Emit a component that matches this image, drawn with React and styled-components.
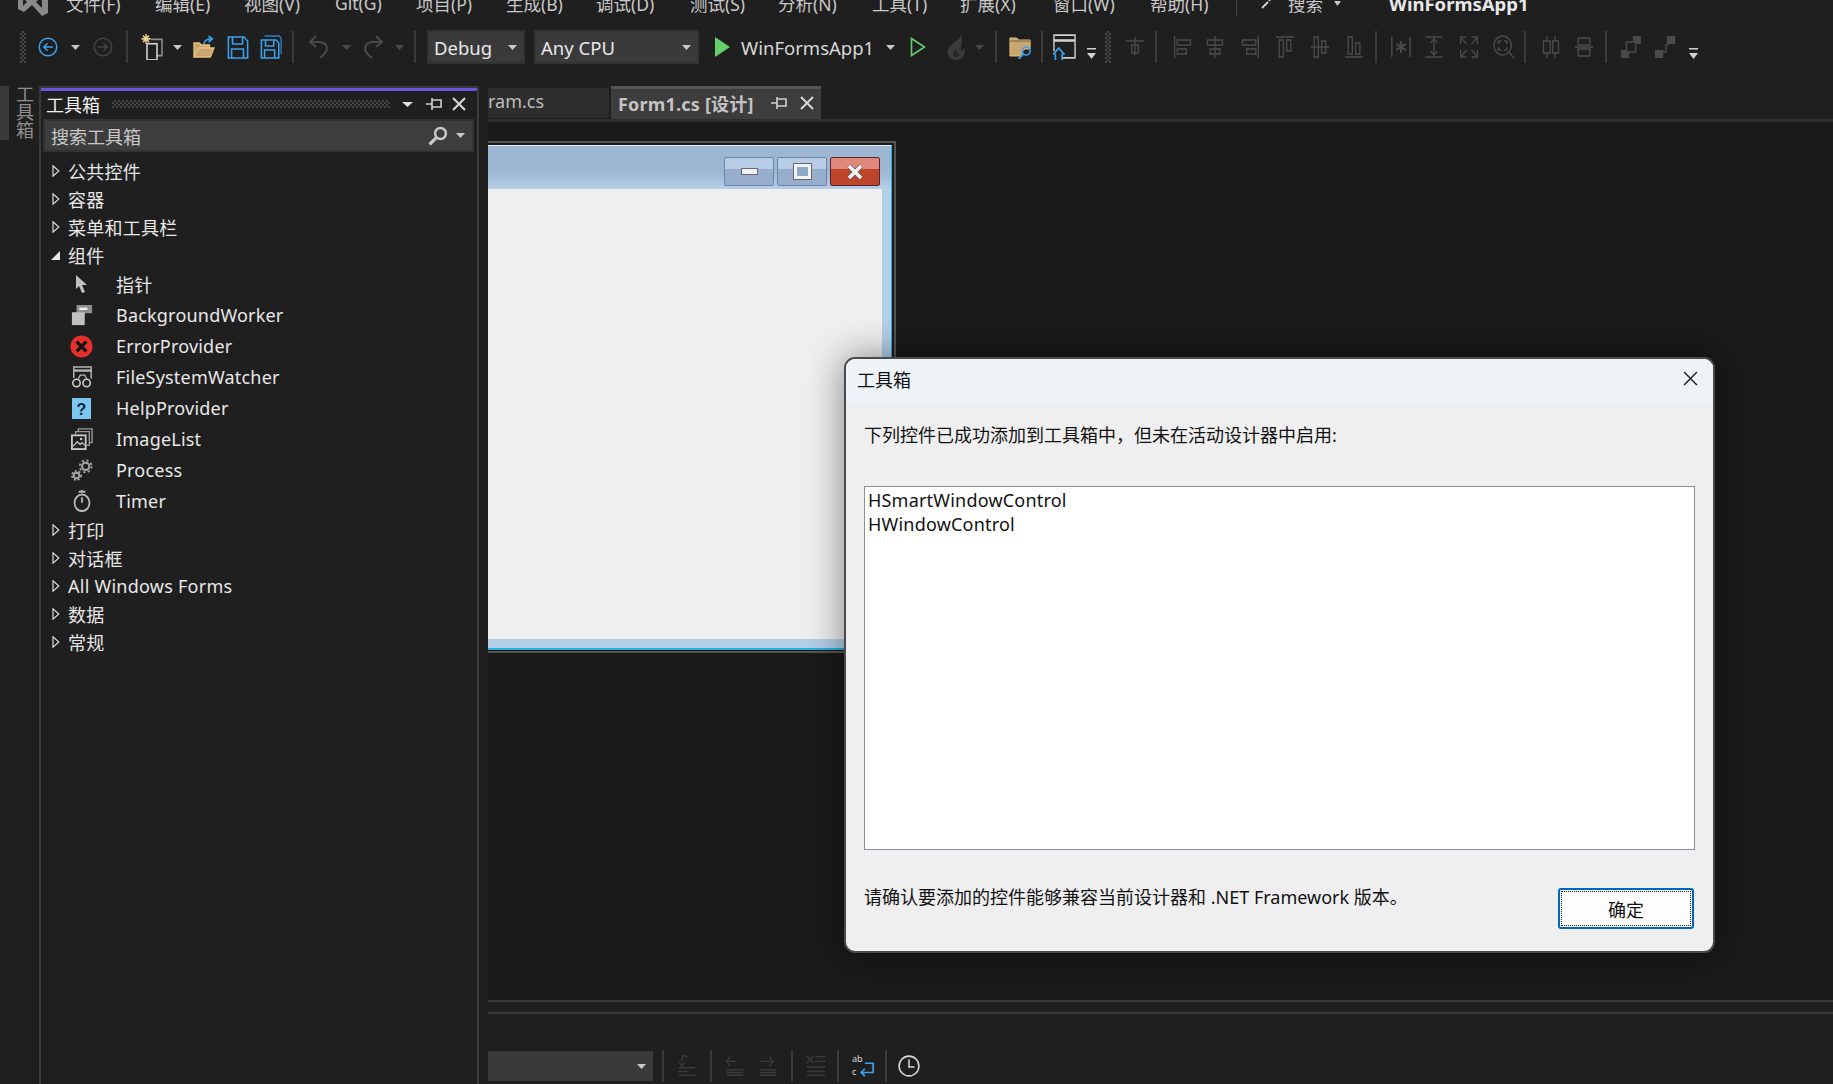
import React from "react";
import styled, { createGlobalStyle } from "styled-components";

const FONT = `"Noto Sans", "Noto Sans CJK SC", sans-serif`;

const GlobalStyle = createGlobalStyle`
  html, body {
    margin: 0;
    padding: 0;
    background: #1f1f1f;
    overflow: hidden;
  }
  * { box-sizing: border-box; }
`;

const Svg = ({ w = 22, h = 22, vb = "0 0 24 24", children }) => (
  <svg width={w} height={h} viewBox={vb} fill="none" preserveAspectRatio="none" style={{ display: "block" }}>
    {children}
  </svg>
);

const Caret = ({ color = "#c8c8c8", w = 9 }) => (
  <svg width={w} height={5} viewBox="0 0 9 5" preserveAspectRatio="none" style={{ display: "block" }}>
    <path d="M0 0h9L4.5 5z" fill={color} />
  </svg>
);

const BLUE = "#3aa0ef";
const DIM = "#4a4a4a";

const CircleArrow = ({ color, dir }) => (
  <Svg w={20} h={20}>
    <circle cx="12" cy="12" r="10.5" stroke={color} strokeWidth="1.8" />
    <path d={dir === "left" ? "M18 12H7M11.5 7.5 7 12l4.5 4.5" : "M6 12h11M12.5 7.5 17 12l-4.5 4.5"} stroke={color} strokeWidth="1.8" />
  </Svg>
);

const NewProject = () => (
  <Svg w={24} h={26}>
    <path d="M10 5h11v15h-5" stroke="#8f8f8f" strokeWidth="1.5" />
    <rect x="6" y="9" width="10" height="15" stroke="#d0d0d0" strokeWidth="1.6" />
    <path d="M5 0v9M.5 4.5h9M2 1.5l6 6M8 1.5l-6 6" stroke="#ecd08e" strokeWidth="1.5" />
  </Svg>
);

const OpenFolder = () => (
  <Svg w={22} h={24}>
    <path d="M1 22V8h6l2 2h9v3H6L1 22h18l4-9H6" fill="#c8a870" stroke="#e8c27e" strokeWidth="1.3" />
    <path d="M12 9c0-3 3-5 7-5M17 1l4 3-4 3" stroke={BLUE} strokeWidth="1.8" />
  </Svg>
);

const Floppy = () => (
  <Svg w={22} h={24}>
    <path d="M1.5 2h17l4 4v17h-21z" stroke={BLUE} strokeWidth="1.7" />
    <path d="M6 2v7h11V2M5 23v-9h13v9" stroke={BLUE} strokeWidth="1.7" />
  </Svg>
);

const FloppyAll = () => (
  <Svg w={22} h={24}>
    <path d="M5 1h16l2 2v16" stroke="#2f80c2" strokeWidth="1.4" />
    <path d="M1.5 5h16l3 3v15h-19z" stroke={BLUE} strokeWidth="1.7" />
    <path d="M6 5v6h9V5M5 23v-8h11v8" stroke={BLUE} strokeWidth="1.7" />
  </Svg>
);

const Undo = ({ flip }) => (
  <svg width={20} height={24} viewBox="0 0 20 24" fill="none" style={{ display: "block", transform: flip ? "scaleX(-1)" : "none" }}>
    <path d="M8 1 2 7l6 5M2 7h9c5 0 8 3 8 6 0 3-2 6-7 10" stroke={DIM} strokeWidth="2" />
  </svg>
);

const Play = ({ outline }) => (
  <svg width={outline ? 16 : 15} height={20} viewBox="0 0 15 20" style={{ display: "block" }}>
    {outline ? (
      <path d="M1 1.5v17L14 10z" fill="none" stroke="#63d06b" strokeWidth="1.6" />
    ) : (
      <path d="M0 0v20l15-10z" fill="#63d06b" />
    )}
  </svg>
);

const Flame = () => (
  <Svg w={20} h={26} vb="0 0 22 26">
    <path d="M16 0c1 6-9 8-13 14-4 6 1 12 8 12 7 0 11-6 9-12-1 2-3 3-4 3 1-6 3-12 0-17z" fill="#3b3b3b" />
    <path d="M11 15c-3 2-4 5-2 8 3 1 6-1 6-3-2 0-3-1-4-5z" fill="#272727" />
  </Svg>
);

const FolderSearch = () => (
  <Svg w={23} h={24}>
    <path d="M1 3h7l2 2h12v9h-5c-3 1-4 4-4 7H1z" fill="#c8a870" stroke="#e8c27e" strokeWidth="1" />
    <path d="M1 6h21" stroke="#8a7650" strokeWidth="1.4" />
    <circle cx="18" cy="16" r="4" stroke={BLUE} strokeWidth="1.7" />
    <path d="M15 19l-5 5" stroke={BLUE} strokeWidth="2" />
  </Svg>
);

const WindowHome = () => (
  <Svg w={23} h={26}>
    <path d="M9 22h14V1H1v15" stroke="#cfcfcf" strokeWidth="1.5" />
    <path d="M1 6h22" stroke="#cfcfcf" strokeWidth="2.4" />
    <path d="M0 19l6-6 6 6M2.5 18v7h7v-7" stroke={BLUE} strokeWidth="1.7" />
  </Svg>
);

const Overflow = () => (
  <svg width={9} height={11} viewBox="0 0 9 11" style={{ display: "block" }}>
    <path d="M0 0h9v1.4H0zM0 5h9l-4.5 6z" fill="#d0d0d0" />
  </svg>
);

const line = { stroke: DIM, strokeWidth: 1.6, fill: "none" };
const Align = ({ kind, w = 20, h = 24 }) => {
  const shapes = {
    left: <><path d="M2 1v22" {...line} /><rect x="5" y="5" width="16" height="5" {...line} /><rect x="5" y="14" width="11" height="5" {...line} /></>,
    center: <><path d="M12 1v22" {...line} /><rect x="3" y="5" width="18" height="5" {...line} /><rect x="6" y="14" width="12" height="5" {...line} /></>,
    right: <><path d="M22 1v22" {...line} /><rect x="3" y="5" width="16" height="5" {...line} /><rect x="8" y="14" width="11" height="5" {...line} /></>,
    top: <><path d="M1 2h22" {...line} /><rect x="5" y="5" width="5" height="17" {...line} /><rect x="14" y="5" width="5" height="11" {...line} /></>,
    middle: <><path d="M1 12h22" {...line} /><rect x="5" y="2" width="5" height="20" {...line} /><rect x="14" y="6" width="5" height="12" {...line} /></>,
    bottom: <><path d="M1 22h22" {...line} /><rect x="5" y="2" width="5" height="17" {...line} /><rect x="14" y="8" width="5" height="11" {...line} /></>,
    star: <><path d="M2 2v20M22 2v20" {...line} /><path d="M12 6v12M7 9l10 6M17 9 7 15" stroke={DIM} strokeWidth="2.2" /></>,
    height: <><path d="M2 2h20M2 22h20M12 4v16M8 8l4-4 4 4M8 16l4 4 4-4" {...line} /></>,
    expand: <><path d="M2 9V2h7M22 9V2h-7M2 15v7h7M22 15v7h-7M3 3l6 6M21 3l-6 6M3 21l6-6M21 21l-6-6" {...line} /></>,
    zoom: <><circle cx="10.5" cy="10.5" r="9.5" {...line} /><path d="M17 17l6 6M6 9V6h3M15 9V6h-3M6 12v3h3M15 12v3h-3" {...line} /></>,
    spaceH: <><path d="M7 1v22M17 1v22" {...line} /><rect x="3" y="6" width="8" height="12" fill="#1f1f1f" stroke={DIM} strokeWidth="1.6" /><rect x="14" y="6" width="7" height="12" fill="#1f1f1f" stroke={DIM} strokeWidth="1.6" /></>,
    spaceV: <><path d="M1 12h22" {...line} /><rect x="5" y="3" width="14" height="7" fill="#1f1f1f" stroke={DIM} strokeWidth="1.6" /><rect x="5" y="14" width="14" height="7" fill="#1f1f1f" stroke={DIM} strokeWidth="1.6" /></>,
    front: <><rect x="1" y="15" width="9" height="8" fill={DIM} /><rect x="14" y="1" width="9" height="8" fill={DIM} /><rect x="7" y="7" width="10" height="10" fill="#1f1f1f" stroke={DIM} strokeWidth="1.6" /></>,
    back: <><rect x="1" y="15" width="9" height="8" fill={DIM} /><rect x="14" y="1" width="9" height="8" fill={DIM} /><path d="M10 17h3v-7h3" {...line} /></>,
    snap: <><path d="M1 6h22M12 2v18M8 10h8v8H8z" {...line} /></>,
  };
  return <Svg w={w} h={h}>{shapes[kind]}</Svg>;
};

const CHROME = "#3a3a3a";
const BottomIcon = ({ kind }) => {
  const p = { stroke: CHROME, strokeWidth: 1.6, fill: "none" };
  const bars = <path d="M3 17h20M3 20h20M3 23h20" {...p} />;
  const map = {
    comment: <><path d="M7 8V5c0-4 6-4 6 0M7 13 4 9M7 13l3-4" {...p} /><path d="M3 15h20M3 19h12M3 23h20" {...p} /></>,
    outdent: <><path d="M14 8H3M7 3 3 8l4 5" {...p} />{bars}</>,
    indent: <><path d="M4 8h15M15 3l4 5-4 5" {...p} />{bars}</>,
    list: <><path d="M2 2l8 8M10 2l-8 8M12 3h12M12 8h12M2 14h22M2 19h22M2 23h22" {...p} /></>,
  };
  return <Svg w={22} h={24} vb="0 0 26 26">{map[kind]}</Svg>;
};

const WrapIcon = () => (
  <Svg w={24} h={24} vb="0 0 26 26">
    <text x="1" y="9" fontSize="10" fontFamily="Noto Sans" fill="#d8d8d8">ab</text>
    <text x="1" y="23" fontSize="10" fontFamily="Noto Sans" fill="#d8d8d8">c</text>
    <path d="M15 10h9v10H11M15 16l-4 4 4 4" stroke={BLUE} strokeWidth="1.8" />
  </Svg>
);

const ClockIcon = () => (
  <Svg w={22} h={22}>
    <circle cx="12" cy="12" r="10.8" stroke="#d8d8d8" strokeWidth="1.7" />
    <path d="M12 5v8h6" stroke="#d8d8d8" strokeWidth="1.7" />
  </Svg>
);

const PinIcon = ({ color = "#d0d0d0" }) => (
  <svg width={16} height={12} viewBox="0 0 16 12" style={{ display: "block" }}>
    <path d="M0 6h6M6 0v12M6 2h9v7H6" fill="none" stroke={color} strokeWidth="1.6" />
  </svg>
);

const CloseIcon = ({ size = 14, color = "#d8d8d8", width = 2 }) => (
  <svg width={size} height={size} viewBox="0 0 14 14" style={{ display: "block" }}>
    <path d="M1 1l12 12M13 1 1 13" stroke={color} strokeWidth={width} />
  </svg>
);

const KeySearch = () => (
  <Svg w={20} h={20}>
    <circle cx="15" cy="9" r="6.5" stroke="#c8c8c8" strokeWidth="3" />
    <path d="M10 14 2 22" stroke="#c8c8c8" strokeWidth="4" />
  </Svg>
);

const Pointer = () => (
  <Svg w={14} h={20} vb="0 0 14 20">
    <path d="M1 1v14l3-3 3 7 3-1-3-7h5z" fill="#c0c0c0" />
  </Svg>
);

const WorkerIcon = () => (
  <Svg w={22} h={22}>
    <path d="M6 1h17v9H15v2H6z" fill="#8f8f8f" />
    <path d="M9 4h9v2.5H9z" fill="#f0f0f0" />
    <path d="M1 9h14v14H1z" fill="#c0c0c0" />
  </Svg>
);

const ErrorIcon = () => (
  <Svg w={23} h={23}>
    <circle cx="12" cy="12" r="11.5" fill="#e5312c" />
    <path d="M7 7l10 10M17 7 7 17" stroke="#111" strokeWidth="3.4" />
  </Svg>
);

const WatcherIcon = () => (
  <Svg w={22} h={22}>
    <path d="M3 13V1h19v13" stroke="#b5b5b5" strokeWidth="1.6" />
    <path d="M3 5h19" stroke="#b5b5b5" strokeWidth="2.6" />
    <path d="M8 14l2-4h5l2 4" stroke="#b5b5b5" strokeWidth="1.4" />
    <circle cx="6" cy="18.5" r="4" stroke="#c8c8c8" strokeWidth="1.8" />
    <circle cx="17" cy="18.5" r="4" stroke="#c8c8c8" strokeWidth="1.8" />
  </Svg>
);

const HelpIcon = () => (
  <svg width={19} height={21} viewBox="0 0 19 21" style={{ display: "block" }}>
    <rect width="19" height="21" fill="#7cc7f2" />
    <text x="9.5" y="16.5" textAnchor="middle" fontSize="16" fontWeight="700" fontFamily="Liberation Sans" fill="#123">?</text>
  </svg>
);

const ImageListIcon = () => (
  <Svg w={22} h={22}>
    <path d="M8 4V1h15v15h-3M5 7V4h15v15h-3" stroke="#9a9a9a" strokeWidth="1.5" />
    <rect x="1" y="8" width="15" height="15" stroke="#c8c8c8" strokeWidth="2" />
    <path d="M2 20l5-5 3 3 2-2 3 3" stroke="#c8c8c8" strokeWidth="1.4" />
    <circle cx="11" cy="12" r="1.4" fill="#c8c8c8" />
  </Svg>
);

const ProcessIcon = () => (
  <Svg w={22} h={22}>
    <circle cx="16" cy="8" r="4" stroke="#a8a8a8" strokeWidth="2.2" />
    <circle cx="16" cy="8" r="6.5" stroke="#a8a8a8" strokeWidth="1.8" strokeDasharray="2.5 2.6" />
    <circle cx="6" cy="18" r="3" stroke="#a8a8a8" strokeWidth="2" />
    <circle cx="6" cy="18" r="5" stroke="#a8a8a8" strokeWidth="1.8" strokeDasharray="2.2 2" />
  </Svg>
);

const TimerIcon = () => (
  <Svg w={20} h={22}>
    <circle cx="12" cy="14" r="9" stroke="#b8b8b8" strokeWidth="2.2" />
    <path d="M12 0v3M8 2h8M12 8v6" stroke="#b8b8b8" strokeWidth="2.2" />
  </Svg>
);

const TreeArrow = ({ open }) => (
  <svg width={9} height={12} viewBox="0 0 9 12" style={{ display: "block", flex: "none" }}>
    {open ? (
      <path d="M9 2v9H0z" fill="#e8e8e8" />
    ) : (
      <path d="M2 .8v10.4L7.8 6z" fill="none" stroke="#d8d8d8" strokeWidth="1.2" />
    )}
  </svg>
);

const MENU = [
  ["文件(F)", 66], ["编辑(E)", 155], ["视图(V)", 244], ["Git(G)", 335], ["项目(P)", 416],
  ["生成(B)", 506], ["调试(D)", 596], ["测试(S)", 690], ["分析(N)", 778], ["工具(T)", 872],
  ["扩展(X)", 960], ["窗口(W)", 1053], ["帮助(H)", 1150],
];

const COMPONENTS = [
  ["指针", <Pointer />],
  ["BackgroundWorker", <WorkerIcon />],
  ["ErrorProvider", <ErrorIcon />],
  ["FileSystemWatcher", <WatcherIcon />],
  ["HelpProvider", <HelpIcon />],
  ["ImageList", <ImageListIcon />],
  ["Process", <ProcessIcon />],
  ["Timer", <TimerIcon />],
];

function App() {
  return (
    <Page>
      <GlobalStyle />
      <MenuBar>
        <Logo>
          <svg width={30} height={28} viewBox="0 0 30 28" style={{ display: "block" }}>
            <path d="M0 7l6-3 8 7L24 0l6 3v22l-6 3-10-11-8 7-6-3z" fill="#8a8a8a" />
            <path d="M5 10v8l4-4zM24 8l-6 6 6 6z" fill="#1f1f1f" />
          </svg>
        </Logo>
        {MENU.map(([label, x], i) => (
          <MenuItem key={label} $ml={i === 0 ? 18 : x - MENU[i - 1][1] - 57}>{label}</MenuItem>
        ))}
        <MenuDivider />
        <SearchMenu>
          <svg width={16} height={12} viewBox="0 0 16 12" style={{ display: "block" }}>
            <path d="M1 11 7 5M8 4c2-3 4-4 7-4" stroke="#d0d0d0" strokeWidth="1.8" fill="none" />
          </svg>
          <span>搜索</span>
          <Caret w={7} />
        </SearchMenu>
        <AppName>WinFormsApp1</AppName>
      </MenuBar>

      <Toolbar>
        <Grip $ml={20} />
        <Tool $ml={12}><CircleArrow color={BLUE} dir="left" /></Tool>
        <Tool $ml={13}><Caret /></Tool>
        <Tool $ml={13}><CircleArrow color="#444" dir="right" /></Tool>
        <Divider $ml={13} />
        <Tool $ml={13}><NewProject /></Tool>
        <Tool $ml={8}><Caret /></Tool>
        <Tool $ml={11}><OpenFolder /></Tool>
        <Tool $ml={12}><Floppy /></Tool>
        <Tool $ml={11}><FloppyAll /></Tool>
        <Divider $ml={10} />
        <Tool $ml={14}><Undo /></Tool>
        <Tool $ml={14}><Caret color={DIM} /></Tool>
        <Tool $ml={13}><Undo flip /></Tool>
        <Tool $ml={11}><Caret color={DIM} /></Tool>
        <Divider $ml={10} />
        <Combo $w={98} $ml={11}>Debug<Caret /></Combo>
        <Combo $w={165} $ml={9}>Any CPU<Caret /></Combo>
        <Tool $ml={16}><Play /></Tool>
        <RunTarget>WinFormsApp1</RunTarget>
        <Tool $ml={11}><Caret /></Tool>
        <Tool $ml={15}><Play outline /></Tool>
        <Tool $ml={20}><Flame /></Tool>
        <Tool $ml={9}><Caret color={DIM} /></Tool>
        <Divider $ml={11} />
        <Tool $ml={12}><FolderSearch /></Tool>
        <Divider $ml={9} />
        <Tool $ml={10}><WindowHome /></Tool>
        <LowTool $ml={11}><Overflow /></LowTool>
        <Grip $ml={9} />
        <Tool $ml={14}><Align kind="snap" /></Tool>
        <Divider $ml={10} />
        <Tool $ml={16}><Align kind="left" /></Tool>
        <Tool $ml={12}><Align kind="center" /></Tool>
        <Tool $ml={15}><Align kind="right" /></Tool>
        <Tool $ml={15}><Align kind="top" /></Tool>
        <Tool $ml={15}><Align kind="middle" /></Tool>
        <Tool $ml={14}><Align kind="bottom" /></Tool>
        <Divider $ml={11} />
        <Tool $ml={13}><Align kind="star" w={22} /></Tool>
        <Tool $ml={12}><Align kind="height" /></Tool>
        <Tool $ml={15}><Align kind="expand" /></Tool>
        <Tool $ml={14}><Align kind="zoom" w={22} h={24} /></Tool>
        <Divider $ml={9} />
        <Tool $ml={15}><Align kind="spaceH" /></Tool>
        <Tool $ml={13}><Align kind="spaceV" /></Tool>
        <Divider $ml={11} />
        <Tool $ml={13}><Align kind="front" w={22} /></Tool>
        <Tool $ml={12}><Align kind="back" w={22} /></Tool>
        <LowTool $ml={13}><Overflow /></LowTool>
      </Toolbar>

      <Main>
        <SideStrip>
          <SideTab />
          <SideLabel>工具箱</SideLabel>
        </SideStrip>

        <ToolboxPanel>
          <PanelHead>
            <PanelTitle>工具箱</PanelTitle>
            <PanelGrip />
            <HeadTool $ml={12}><Caret w={11} color="#e0e0e0" /></HeadTool>
            <HeadTool $ml={13}><PinIcon /></HeadTool>
            <HeadTool $ml={10}><CloseIcon /></HeadTool>
          </PanelHead>
          <SearchBox>
            <span>搜索工具箱</span>
            <KeySearch />
            <Caret />
          </SearchBox>
          <Tree>
            {["公共控件", "容器", "菜单和工具栏"].map((t) => (
              <GroupRow key={t}><TreeArrow />{t}</GroupRow>
            ))}
            <GroupRow><TreeArrow open />组件</GroupRow>
            {COMPONENTS.map(([name, icon]) => (
              <ItemRow key={name}>
                <ItemIcon>{icon}</ItemIcon>
                {name}
              </ItemRow>
            ))}
            {["打印", "对话框", "All Windows Forms", "数据", "常规"].map((t) => (
              <GroupRow key={t}><TreeArrow />{t}</GroupRow>
            ))}
          </Tree>
        </ToolboxPanel>

        <EditorColumn>
          <TabStrip>
            <FileTab>ram.cs</FileTab>
            <ActiveTab>
              <strong>Form1.cs [设计]</strong>
              <PinIcon />
              <CloseIcon />
            </ActiveTab>
          </TabStrip>
          <Canvas>
            <DesignFrame>
              <FormWindow>
                <FormTitle>
                  <CaptionButton><MinGlyph /></CaptionButton>
                  <CaptionButton><MaxGlyph /></CaptionButton>
                  <CaptionButton $close>
                    <svg width={18} height={16} viewBox="0 0 18 16" style={{ display: "block" }}>
                      <path d="M3 2l12 12M15 2 3 14" stroke="#555" strokeWidth="5" />
                      <path d="M3 2l12 12M15 2 3 14" stroke="#f2f2f2" strokeWidth="3.6" />
                    </svg>
                  </CaptionButton>
                </FormTitle>
                <FormBody />
              </FormWindow>
            </DesignFrame>
          </Canvas>
          <BottomPanel>
            <OutputToolbar>
              <OutputCombo><Caret /></OutputCombo>
              <Divider $ml={9} />
              <Tool $ml={12}><BottomIcon kind="comment" /></Tool>
              <Divider $ml={12} />
              <Tool $ml={12}><BottomIcon kind="outdent" /></Tool>
              <Tool $ml={11}><BottomIcon kind="indent" /></Tool>
              <Divider $ml={12} />
              <Tool $ml={12}><BottomIcon kind="list" /></Tool>
              <Divider $ml={10} />
              <Tool $ml={12}><WrapIcon /></Tool>
              <Divider $ml={10} />
              <Tool $ml={11}><ClockIcon /></Tool>
            </OutputToolbar>
          </BottomPanel>
        </EditorColumn>
      </Main>

      <Dialog>
        <DialogHead>
          <span>工具箱</span>
          <CloseIcon size={15} color="#222" width={1.4} />
        </DialogHead>
        <DialogBody>
          <Message>下列控件已成功添加到工具箱中，但未在活动设计器中启用:</Message>
          <ControlList>
            <div>HSmartWindowControl</div>
            <div>HWindowControl</div>
          </ControlList>
          <DialogFoot>
            <FootNote>请确认要添加的控件能够兼容当前设计器和 .NET Framework 版本。</FootNote>
            <OkButton><span>确定</span></OkButton>
          </DialogFoot>
        </DialogBody>
      </Dialog>
    </Page>
  );
}

const Page = styled.div`
  position: relative;
  width: 1833px;
  height: 1084px;
  overflow: hidden;
  display: flex;
  flex-direction: column;
  background: #1f1f1f;
  color: #e8e8e8;
  font-family: ${FONT};
  font-size: 18px;
`;

const MenuBar = styled.div`
  display: flex;
  align-items: center;
  height: 30px;
  margin-top: -12px;
  flex: none;
  padding-left: 18px;
  color: #c8c8c8;
  font-size: 17.5px;
`;

const Logo = styled.div`
  width: 30px;
  margin-top: -2px;
`;

const MenuItem = styled.div`
  width: 57px;
  margin-left: ${(p) => p.$ml}px;
  white-space: nowrap;
`;

const MenuDivider = styled.div`
  width: 1px;
  height: 26px;
  margin-left: 29px;
  background: #444;
`;

const SearchMenu = styled.div`
  display: flex;
  align-items: center;
  gap: 11px;
  margin-left: 24px;
`;

const AppName = styled.div`
  margin-left: 48px;
  font-weight: 700;
  color: #e8e8e8;
  font-size: 18.5px;
`;

const Toolbar = styled.div`
  display: flex;
  align-items: center;
  height: 58px;
  flex: none;
`;

const Tool = styled.div`
  flex: none;
  margin-left: ${(p) => p.$ml}px;
`;

const LowTool = styled(Tool)`
  margin-top: 12px;
`;

const Grip = styled.div`
  flex: none;
  width: 6px;
  height: 32px;
  margin-left: ${(p) => p.$ml}px;
  background: repeating-conic-gradient(#484848 0 25%, transparent 0 50%) 0 0 / 4px 4px;
`;

const Divider = styled.div`
  flex: none;
  width: 2px;
  height: 32px;
  margin-left: ${(p) => p.$ml}px;
  background: #3a3a3a;
`;

const Combo = styled.div`
  flex: none;
  display: flex;
  align-items: center;
  justify-content: space-between;
  width: ${(p) => p.$w}px;
  height: 34px;
  margin-left: ${(p) => p.$ml}px;
  padding: 0 6px 0 5px;
  background: #3a3a3a;
  border: 2px solid #333;
  color: #e8e8e8;
  font-size: 18.5px;
`;

const RunTarget = styled.div`
  flex: none;
  margin-left: 11px;
  width: 134px;
  white-space: nowrap;
  color: #d8d8d8;
  font-size: 18.5px;
`;

const Main = styled.div`
  flex: 1;
  display: flex;
  min-height: 0;
`;

const SideStrip = styled.div`
  flex: none;
  width: 39px;
  padding-top: 10px;
  display: flex;
  align-items: flex-start;
`;

const SideTab = styled.div`
  width: 9px;
  height: 54px;
  background: #3a3a3a;
`;

const SideLabel = styled.div`
  margin-left: 6px;
  margin-top: -1px;
  writing-mode: vertical-rl;
  color: #8f8f8f;
  font-size: 18px;
  line-height: 18px;
`;

const ToolboxPanel = styled.div`
  flex: none;
  width: 440px;
  margin-top: 10px;
  border: 2px solid #3a3a3a;
  border-bottom: none;
  display: flex;
  flex-direction: column;
`;

const PanelHead = styled.div`
  height: 33px;
  flex: none;
  display: flex;
  align-items: center;
  padding: 0 0 4px 5px;
  border-top: 3px solid #6a55e0;
`;

const PanelTitle = styled.div`
  width: 54px;
  white-space: nowrap;
  color: #f0f0f0;
`;

const PanelGrip = styled.div`
  width: 278px;
  height: 8px;
  margin-left: 12px;
  background: repeating-conic-gradient(#444 0 25%, transparent 0 50%) 0 0 / 4px 4px;
`;

const HeadTool = styled(Tool)``;

const SearchBox = styled.div`
  flex: none;
  display: flex;
  align-items: center;
  height: 33px;
  margin: -2px 3px 0 2px;
  padding: 0 7px 0 6px;
  background: #3d3d3d;
  border: 2px solid #333;
  color: #c8c8c8;
  span {
    flex: 1;
  }
  svg + svg {
    margin-left: 8px;
  }
`;

const Tree = styled.div`
  padding-top: 5px;
  display: flex;
  flex-direction: column;
`;

const GroupRow = styled.div`
  display: flex;
  align-items: center;
  gap: 8px;
  height: 28px;
  padding-left: 10px;
  color: #e8e8e8;
  white-space: nowrap;
  letter-spacing: 0.25px;
`;

const ItemRow = styled.div`
  display: flex;
  align-items: center;
  height: 30.9px;
  padding-left: 29px;
  color: #e8e8e8;
  white-space: nowrap;
  letter-spacing: 0.2px;
`;

const ItemIcon = styled.div`
  width: 23px;
  margin-right: 23px;
  display: flex;
  justify-content: center;
`;

const EditorColumn = styled.div`
  flex: 1;
  min-width: 0;
  margin-left: 9px;
  display: flex;
  flex-direction: column;
`;

const TabStrip = styled.div`
  flex: none;
  height: 46px;
  display: flex;
  align-items: flex-end;
  gap: 2px;
  border-bottom: 3px solid #2e2e2e;
`;

const FileTab = styled.div`
  width: 121px;
  height: 30px;
  margin-bottom: 1px;
  background: #2d2d2d;
  color: #bdbdbd;
  line-height: 26px;
  white-space: nowrap;
`;

const ActiveTab = styled.div`
  width: 210px;
  height: 33px;
  display: flex;
  align-items: center;
  padding: 0 0 3px 7px;
  background: #3d3d3d;
  border-top: 3px solid #555;
  color: #c4c4c4;
  strong {
    width: 153px;
    font-weight: 700;
    white-space: nowrap;
    letter-spacing: 0.2px;
  }
  svg + svg {
    margin-left: 13px;
  }
`;

const Canvas = styled.div`
  flex: 1;
  min-height: 0;
  padding-top: 19px;
  background: #1a1a1a;
`;

const DesignFrame = styled.div`
  width: 408px;
  height: 512px;
  padding: 2px 2px 1px 0;
  border: 2px solid #555;
  border-left: none;
`;

const FormWindow = styled.div`
  height: 505px;
  display: flex;
  flex-direction: column;
  background: #b5cfe9;
  border-top: 1px solid #e8f0f8;
  border-right: 1px solid #23b5d8;
  border-bottom: 2px solid #23b5d8;
  padding-right: 9px;
`;

const FormTitle = styled.div`
  flex: none;
  height: 43px;
  margin-right: -9px;
  padding: 11px 11px 0 0;
  display: flex;
  justify-content: flex-end;
  gap: 3px;
  background: linear-gradient(#9db7d3 0%, #9db7d3 60%, #b5cfe9 100%);
`;

const CaptionButton = styled.div`
  width: 50px;
  height: 29px;
  display: flex;
  align-items: center;
  justify-content: center;
  border: 1px solid ${(p) => (p.$close ? "#5a2230" : "#6f86a3")};
  border-radius: 2px;
  background: ${(p) =>
    p.$close
      ? "linear-gradient(#e0897a 0%, #e0897a 42%, #bd452a 42%, #bd452a 100%)"
      : "linear-gradient(#b6cde5 0%, #b6cde5 42%, #96aecb 42%, #96aecb 100%)"};
`;

const MinGlyph = styled.div`
  width: 17px;
  height: 7px;
  background: #f4f4f4;
  border: 1px solid #667;
`;

const MaxGlyph = styled.div`
  width: 17px;
  height: 15px;
  background: #8ea9c8;
  border: 3px solid #f2f2f2;
  outline: 1px solid #667;
`;

const FormBody = styled.div`
  flex: 1;
  margin-bottom: 9px;
  background: #efefef;
`;

const BottomPanel = styled.div`
  flex: none;
  height: 84px;
  border-top: 2px solid #3a3a3a;
  padding-top: 10px;
  &::before {
    content: "";
    display: block;
    height: 2px;
    background: #3a3a3a;
  }
`;

const OutputToolbar = styled.div`
  display: flex;
  align-items: center;
  height: 30px;
  margin-top: 37px;
`;

const OutputCombo = styled.div`
  flex: none;
  width: 165px;
  height: 30px;
  display: flex;
  align-items: center;
  justify-content: flex-end;
  padding-right: 7px;
  background: #3a3a3a;
`;

const Dialog = styled.div`
  position: absolute;
  left: 844px;
  top: 357px;
  width: 871px;
  height: 596px;
  display: flex;
  flex-direction: column;
  border: 2px solid #4a4a4a;
  border-radius: 11px;
  overflow: hidden;
  background: #efefef;
  box-shadow: 0 0 38px rgba(0, 0, 0, 0.45);
  color: #111;
`;

const DialogHead = styled.div`
  flex: none;
  height: 43px;
  display: flex;
  align-items: center;
  justify-content: space-between;
  padding: 0 15px 4px 11px;
  background: #eef3f8;
`;

const DialogBody = styled.div`
  padding: 21px 18px 0;
`;

const Message = styled.div`
  line-height: 24px;
  font-size: 18px;
  white-space: nowrap;
`;

const ControlList = styled.div`
  height: 364px;
  margin-top: 39px;
  padding: 1px 3px;
  background: #fff;
  border: 1px solid #8a8f99;
  line-height: 24px;
  letter-spacing: 0.2px;
`;

const DialogFoot = styled.div`
  display: flex;
  justify-content: space-between;
  align-items: flex-start;
  margin-top: 38px;
  padding-right: 1px;
`;

const FootNote = styled.div`
  margin-top: -3px;
  line-height: 24px;
  font-size: 18px;
  white-space: nowrap;
`;

const OkButton = styled.div`
  width: 136px;
  height: 41px;
  padding: 1px;
  border: 2px solid #0067c0;
  border-radius: 3px;
  background: #fdfdfd;
  span {
    display: flex;
    align-items: center;
    justify-content: center;
    height: 100%;
    border: 1px dotted #222;
    font-size: 18px;
  }
`;

export default App;
